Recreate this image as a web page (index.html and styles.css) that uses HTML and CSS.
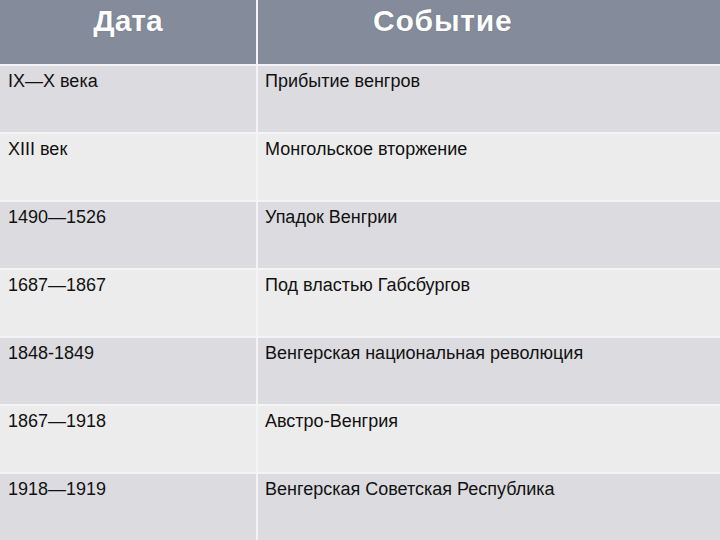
FILE: index.html
```html
<!DOCTYPE html>
<html lang="ru">
<head>
<meta charset="utf-8">
<link rel="stylesheet" href="styles.css">
</head>
<body>
<div class="table">
  <div class="th th-date">Дата</div>
  <div class="th th-event">Событие</div>
  <div class="td odd">IX—X века</div><div class="td odd ev">Прибытие венгров</div>
  <div class="td even">XIII век</div><div class="td even ev">Монгольское вторжение</div>
  <div class="td odd">1490—1526</div><div class="td odd ev">Упадок Венгрии</div>
  <div class="td even">1687—1867</div><div class="td even ev">Под властью Габсбургов</div>
  <div class="td odd">1848-1849</div><div class="td odd ev">Венгерская национальная революция</div>
  <div class="td even">1867—1918</div><div class="td even ev">Австро-Венгрия</div>
  <div class="td odd">1918—1919</div><div class="td odd ev">Венгерская Советская Республика</div>
</div>
</body>
</html>
```
FILE: styles.css
```css
html, body {
  margin: 0;
  padding: 0;
  width: 720px;
  height: 540px;
  overflow: hidden;
  background: #ffffff;
}
.table {
  display: grid;
  grid-template-columns: 256px 1fr;
  grid-template-rows: 64px repeat(7, 66px);
  column-gap: 2px;
  row-gap: 2px;
  background: #f4f4f6;
  width: 720px;
  height: 540px;
  font-family: "Liberation Sans", Arial, sans-serif;
}
.th {
  background: #848b9a;
  color: #ffffff;
  font-weight: bold;
  font-size: 30px;
  line-height: 34px;
  padding-top: 4px;
  box-sizing: border-box;
  text-shadow: 0 0 1px rgba(60, 60, 70, 0.5);
}
.th-date {
  text-align: center;
}
.th-event {
  padding-left: 115px;
  letter-spacing: 0.8px;
}
.td {
  font-size: 18px;
  line-height: 21px;
  color: #111111;
  padding: 5px 0 0 8px;
  box-sizing: border-box;
}
.td.ev {
  padding-left: 7px;
}
.odd {
  background: #dcdce0;
}
.even {
  background: #ececec;
}
```
